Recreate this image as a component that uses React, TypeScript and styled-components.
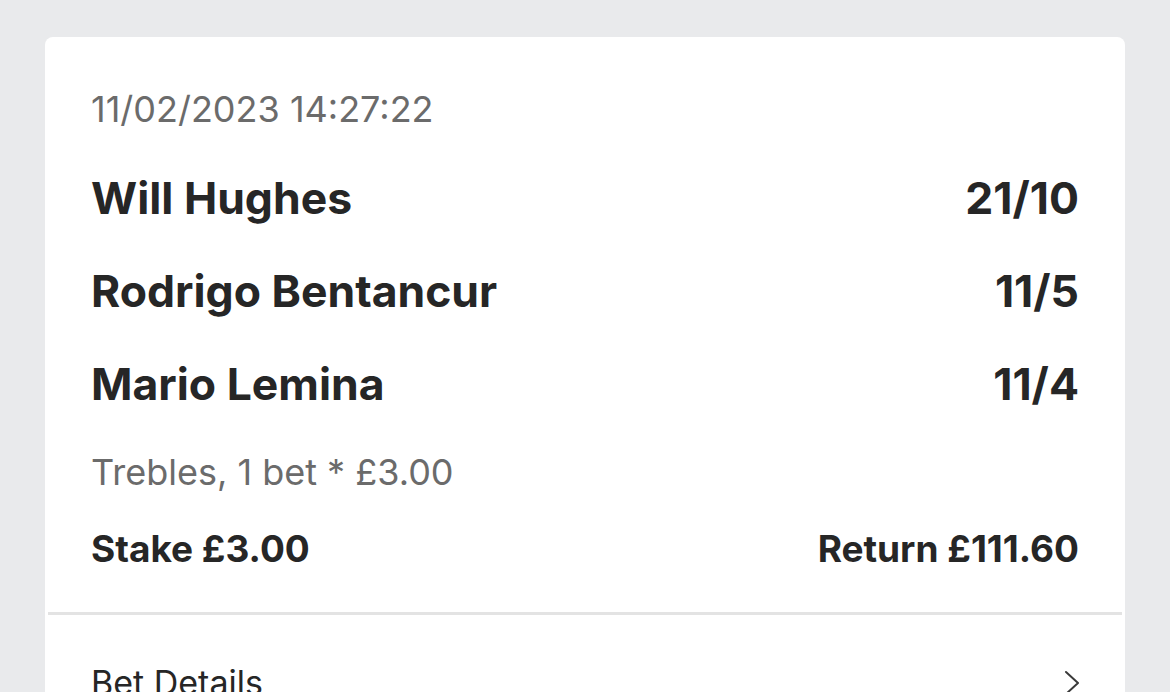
import React from 'react';
import styled, {createGlobalStyle} from 'styled-components';

const GlobalStyle = createGlobalStyle`
    html, body {
        margin: 0;
        padding: 0;
        background: #e9eaec;
    }
    body {
        font-family: Inter, "Noto Sans", "Liberation Sans", sans-serif;
        -webkit-font-smoothing: antialiased;
    }
`;

type Selection = {
    name: string;
    odds: string;
};

const selections: Selection[] = [
    {name: 'Will Hughes', odds: '21/10'},
    {name: 'Rodrigo Bentancur', odds: '11/5'},
    {name: 'Mario Lemina', odds: '11/4'},
];

export default function App() {
    return (
        <StyledPage>
            <GlobalStyle />
            <StyledCard>
                <StyledSummary>
                    <StyledDate>11/02/2023 14:27:22</StyledDate>
                    <StyledSelectionList>
                        {selections.map((selection) => (
                            <StyledSelectionRow key={selection.name}>
                                <span>{selection.name}</span>
                                <span>{selection.odds}</span>
                            </StyledSelectionRow>
                        ))}
                    </StyledSelectionList>
                    <StyledBetType>Trebles, 1 bet * £3.00</StyledBetType>
                    <StyledTotals>
                        <span>Stake £3.00</span>
                        <span>Return £111.60</span>
                    </StyledTotals>
                </StyledSummary>
                <StyledDivider />
                <StyledDetailsLink type="button">
                    <span>Bet Details</span>
                    <svg width="18" height="26" viewBox="0 0 18 26" fill="none">
                        <polyline
                            points="3,2 15,13 3,24"
                            stroke="#3a3a3a"
                            strokeWidth="2"
                            strokeLinecap="round"
                            strokeLinejoin="round"
                        />
                    </svg>
                </StyledDetailsLink>
            </StyledCard>
        </StyledPage>
    );
}

const StyledPage = styled.div`
    height: 692px;
    overflow: hidden;
    padding: 37px 45px 0;
    box-sizing: border-box;
    background: #e9eaec;
`;

const StyledCard = styled.div`
    background: #ffffff;
    border-radius: 8px 8px 0 0;
    height: 720px;
`;

const StyledSummary = styled.div`
    padding: 50px 46px 0;
    height: 575px;
    box-sizing: border-box;
`;

const StyledDate = styled.div`
    font-size: 36px;
    line-height: 44px;
    color: #6b6b6b;
`;

const StyledSelectionList = styled.div`
    display: flex;
    flex-direction: column;
    margin-top: 41px;
`;

const StyledSelectionRow = styled.div`
    display: flex;
    justify-content: space-between;
    align-items: baseline;
    height: 93px;
    line-height: 52px;
    font-size: 44.5px;
    font-weight: 650;
    color: #262626;
`;

const StyledBetType = styled.div`
    margin-top: -1px;
    font-size: 36px;
    line-height: 44px;
    color: #6b6b6b;
`;

const StyledTotals = styled.div`
    display: flex;
    justify-content: space-between;
    margin-top: 33px;
    font-size: 37px;
    line-height: 44px;
    font-weight: 650;
    color: #262626;
`;

const StyledDivider = styled.div`
    height: 3px;
    margin: 0 3px;
    background: #e3e3e3;
`;

const StyledDetailsLink = styled.button`
    display: flex;
    justify-content: space-between;
    align-items: center;
    width: 100%;
    padding: 46px 44px 0 46px;
    border: none;
    background: none;
    font-family: inherit;
    font-size: 34px;
    line-height: 44px;
    color: #262626;
    text-align: left;
    cursor: pointer;
`;
